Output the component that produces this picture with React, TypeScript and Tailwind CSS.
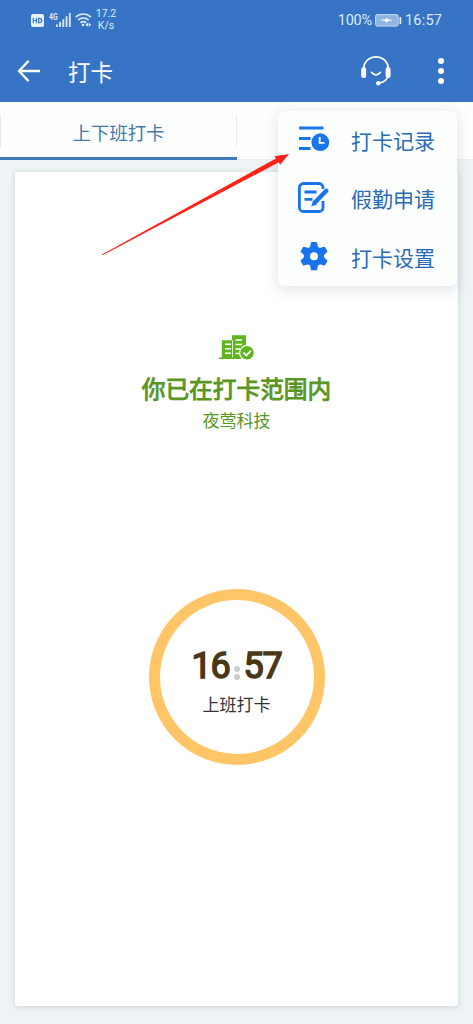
import React from 'react';

function StatusBar() {
  return (
    <div className="flex h-10 items-start pl-[31px] pr-[30px] text-[#dcebf8]">
      <svg className="mt-[14px] h-[13px] w-[13px] shrink-0" viewBox="0 0 13 13">
        <rect width="13" height="13" rx="2" fill="#e6f1fc" />
        <path d="M2.300 3.800v5.400M5.500 3.800v5.400M2.300 6.500h3.200M7.700 4.300v4.400h.8c1.500 0 2.200-.8 2.200-2.200s-.7-2.200-2.200-2.200z" fill="none" stroke="#3875c5" strokeWidth="1.200" />
      </svg>
      <div className="ml-[5px] mt-[11px] w-[8px] origin-left scale-x-[0.72] font-[Roboto,sans-serif] text-[9.500px] font-bold leading-[11px]">4G</div>
      <svg className="-ml-[1px] mt-[13px] h-[14px] w-[15px] shrink-0" viewBox="0 0 15 14" fill="currentColor">
        <rect x="0" y="11.500" width="1.800" height="2.500" />
        <rect x="3.200" y="9" width="1.800" height="5" />
        <rect x="6.400" y="6.300" width="1.800" height="7.700" />
        <rect x="9.600" y="3.300" width="1.800" height="10.700" />
        <rect x="12.900" y="0" width="1.800" height="14" />
      </svg>
      <svg className="ml-[4px] mt-[12px] h-[16px] w-[17px] shrink-0" viewBox="0 0 17 16" fill="none" stroke="currentColor" strokeWidth="1.600">
        <path d="M.7 5.100c4.300-4.200 10.900-4.200 15.200 0M3.100 8.100c3-2.900 7.500-2.900 10.500 0M5.500 10.800c1.700-1.500 4-1.500 5.700 0" />
        <circle cx="8" cy="13" r="1.300" fill="currentColor" stroke="none" />
        <path d="M10.300 12.700l2.700-2v4zM16.400 12.700l-2.700-2v4z" fill="currentColor" stroke="none" />
      </svg>
      <div className="ml-[3px] mt-[8px] w-[22px] text-center font-[Roboto,sans-serif] text-[10.500px] leading-[12px]">
        <div>17.2</div>
        <div>K/s</div>
      </div>
      <div className="ml-auto mt-[12px] font-[Roboto,sans-serif] text-[14.500px] leading-[18px] tracking-[-0.2px]">100%</div>
      <svg className="ml-[3px] mt-[14px] h-[13px] w-[27px] shrink-0" viewBox="0 0 27 13">
        <rect x=".6" y=".6" width="22.500" height="11.500" rx="1.500" fill="#8fb3e2" stroke="#c6dbf3" />
        <path d="M6 6l5 -.5.800-1.500 1.200 1.500 4 .8-4 .7-1.500 1.500-.7-1.600z" fill="#fff" stroke="#fff" strokeWidth=".4" />
        <rect x="24.500" y="3" width="1.700" height="7" rx=".5" fill="#e6f1fc" />
      </svg>
      <div className="ml-[3px] mt-[12px] w-[38px] font-[Roboto,sans-serif] text-[14.500px] leading-[18px] tracking-[0.2px]">16:57</div>
    </div>
  );
}

function TitleBar() {
  return (
    <div className="flex h-[62px] items-center pl-[17px] text-white">
      <svg className="h-6 w-6" viewBox="0 0 24 24" fill="none" stroke="currentColor" strokeWidth="2.400" strokeLinecap="round" strokeLinejoin="round">
        <path d="M11 2.500L2 12l9 9.500M2 12h20" />
      </svg>
      <h1 className="ml-[27px] text-[22.500px] font-normal leading-7">打卡</h1>
      <svg className="ml-auto h-[32px] w-[32px]" viewBox="0 0 32 32" fill="none" stroke="currentColor" strokeWidth="1.700" strokeLinecap="round">
        <path d="M3.800 13.500a12.200 11.700 0 0 1 24.400 0v5.500c0 5-4 8.200-9 9M11.500 17.300c2.300 3.300 6.700 3.300 9 0" />
        <rect x="1.200" y="12.300" width="5" height="10.600" rx="2.200" fill="currentColor" stroke="none" />
        <rect x="25.600" y="12.300" width="5" height="10.600" rx="2.200" fill="currentColor" stroke="none" />
        <circle cx="18.300" cy="28.300" r="2.200" fill="currentColor" stroke="none" />
      </svg>
      <div className="ml-[46px] mr-[29px] flex flex-col gap-[4.200px]">
        <i className="h-[5.600px] w-[5.600px] rounded-full bg-white" />
        <i className="h-[5.600px] w-[5.600px] rounded-full bg-white" />
        <i className="h-[5.600px] w-[5.600px] rounded-full bg-white" />
      </div>
    </div>
  );
}

function RecordIcon() {
  return (
    <svg className="h-8 w-8" viewBox="0 0 32 32" fill="none" stroke="#1a74ec" strokeWidth="2.800">
      <path d="M1 4h24.500M1 14.500h11.500M1 24.500h11.500" />
      <circle cx="22.300" cy="18.200" r="8.900" fill="#1a74ec" stroke="none" />
      <path d="M21.700 13v5.800h4.800" stroke="#fff" strokeWidth="1.800" />
    </svg>
  );
}

function ApplyIcon() {
  return (
    <svg className="h-8 w-8 overflow-visible" viewBox="0 0 32 32" fill="none" stroke="#1a74ec" strokeWidth="2.800">
      <path d="M25 6V4.500a4 4 0 0 0-4-4H5.400a4 4 0 0 0-4 4v20a4 4 0 0 0 4 4H21a4 4 0 0 0 4-4V18M6.500 9h12M6.500 16.300h8" />
      <path d="M17.300 19L28.300 7.800" strokeWidth="4.400" strokeLinecap="round" />
      <path d="M15 17.500l4 4-5.800 2z" fill="#1a74ec" stroke="none" />
    </svg>
  );
}

function GearIcon() {
  return (
    <svg className="h-8 w-8" viewBox="0 0 32 32">
      <path fill="#1a74ec" stroke="#1a74ec" strokeWidth="1.500" strokeLinejoin="round" fillRule="evenodd" d="M13.700 1.800h4.600l1 4.500 2.600 1.500 4.400-1.400 2.300 4-3.300 3.300v2.900l3.300 3.300-2.300 4-4.400-1.400-2.600 1.500-1 4.500h-4.600l-1-4.500-2.600-1.500-4.400 1.400-2.300-4 3.300-3.300v-2.900l-3.300-3.300 2.300-4 4.400 1.400 2.600-1.500zM16 10.400a4.800 4.800 0 1 0 0 9.600 4.800 4.800 0 0 0 0-9.600z" />
    </svg>
  );
}

const menuItems = [
  { label: '打卡记录', Icon: RecordIcon },
  { label: '假勤申请', Icon: ApplyIcon },
  { label: '打卡设置', Icon: GearIcon },
];

function Menu() {
  return (
    <div className="absolute left-[278px] top-[111px] h-[175px] w-[179px] rounded-md bg-[#fdfefe] shadow-[0_3px_14px_rgba(60,80,100,0.17)]">
      {menuItems.map(({ label, Icon }) => (
        <div key={label} className="flex h-[58.500px] items-center pl-5">
          <Icon />
          <span className="-mt-[1px] ml-[21px] text-[21px] leading-7 text-[#286bbb]">{label}</span>
        </div>
      ))}
    </div>
  );
}

function PunchCard() {
  return (
    <main className="mx-[15px] mt-3 flex h-[834px] flex-col items-center rounded-[3px] bg-white shadow-[0_1px_6px_rgba(60,80,100,0.20)]">
      <svg className="mt-[162px] h-[28px] w-[36px]" viewBox="0 0 36 28">
        <path fill="#5eb51e" d="M0 23.500h2.800V6.200H13V1.200h14V25H0z" />
        <path d="M6 10.300h6M6 14.800h6M6 19.300h6M16.500 6h6.500M16.500 10.500h6.500M16.500 15h4.500M16.500 19.500h4" stroke="#fff" strokeWidth="1.400" />
        <path d="M13.500 6v17.500" stroke="#fff" strokeWidth=".8" />
        <circle cx="28" cy="18.800" r="7.400" fill="#5eb51e" stroke="#fff" strokeWidth="1.200" />
        <path d="M24.400 18.600l2.900 2.800 4.700-4.700" fill="none" stroke="#fff" strokeWidth="1.800" />
      </svg>
      <h2 className="mt-[11px] text-[23.700px] font-normal leading-[30px] text-[#589622] [-webkit-text-stroke:0.9px_#589622]">你已在打卡范围内</h2>
      <p className="mt-[5px] text-[17px] leading-6 text-[#589622]">夜莺科技</p>
      <button className="mt-[157px] flex h-[176px] w-[176px] flex-col items-center rounded-full border-[11px] border-[#ffc566] pt-[45px]">
        <span className="flex h-[42px] items-center font-[Roboto,sans-serif] text-[36px] leading-[42px] tracking-[-1.200px] text-[#493716] [-webkit-text-stroke:1.500px_#493716]">
          <span>16</span>
          <span className="mx-[4px] mt-[13px] flex shrink-0 flex-col gap-[2px]">
            <i className="block h-[6px] w-[6px] shrink-0 rounded-full bg-[#ccc]" />
            <i className="block h-[6px] w-[6px] shrink-0 rounded-full bg-[#ccc]" />
          </span>
          <span>57</span>
        </span>
        <span className="mt-[5px] text-[17px] leading-6 text-[#333]">上班打卡</span>
      </button>
    </main>
  );
}

export default function App() {
  return (
    <div className="relative h-[1024px] w-full overflow-hidden bg-[#eff3f5] font-['Noto_Sans_CJK_SC',sans-serif]">
      <header className="h-[102px] bg-[#3874c5]">
        <StatusBar />
        <TitleBar />
      </header>
      <nav className="flex h-[58px] border-b border-[#eceef0] bg-[#fdfefe] pt-[13px]">
        <div className="flex h-[45px] w-[237px] flex-col justify-between border-b-[3px] border-[#4279bb]">
          <div className="h-8 border-x border-[#e8ebed] text-center text-[18.400px] leading-[35px] text-[#4679af]">上下班打卡</div>
        </div>
      </nav>
      <PunchCard />
      <Menu />
      <svg className="absolute left-[100px] top-[150px] h-[108px] w-[192px]" viewBox="0 0 192 108">
        <path d="M2 104.500L176 8.400l-1.700-2.200L189 4l-8.800 10.800-1.400-2.500L2.600 105.200z" fill="#ff2318" />
      </svg>
    </div>
  );
}
